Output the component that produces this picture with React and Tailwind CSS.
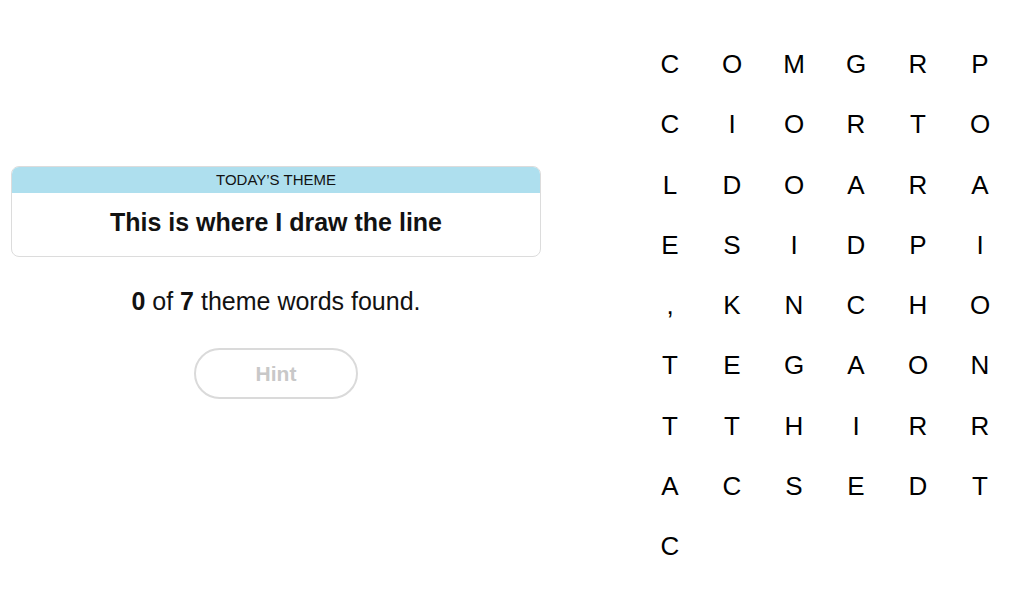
const LETTERS = [
  ['C', 'O', 'M', 'G', 'R', 'P'],
  ['C', 'I', 'O', 'R', 'T', 'O'],
  ['L', 'D', 'O', 'A', 'R', 'A'],
  ['E', 'S', 'I', 'D', 'P', 'I'],
  [',', 'K', 'N', 'C', 'H', 'O'],
  ['T', 'E', 'G', 'A', 'O', 'N'],
  ['T', 'T', 'H', 'I', 'R', 'R'],
  ['A', 'C', 'S', 'E', 'D', 'T'],
  ['C'],
];

export default function App() {
  return (
    <div className="flex h-[605px] w-[1024px] bg-white font-['Liberation_Sans',Arial,sans-serif] text-[#121212]">
      {/* theme panel */}
      <div className="ml-[11px] mt-[166px] w-[530px] shrink-0">
        <div className="overflow-hidden rounded-lg border border-[#dcdcdc]">
          <div className="flex h-[26px] items-center justify-center bg-[#aedfee] text-[15px] uppercase">
            Today&rsquo;s Theme
          </div>
          <div className="flex h-[63px] items-center justify-center pb-[4px] text-[25px] font-bold">
            This is where I draw the line
          </div>
        </div>
        <p className="mt-[29px] text-center text-[25px] leading-[30px]">
          <b>0</b> of <b>7</b> theme words found.
        </p>
        <div className="mt-[32px] flex justify-center">
          <button className="h-[51px] w-[164px] rounded-full border-2 border-[#dadada] text-[21px] font-bold text-[#c8c8c8]">
            Hint
          </button>
        </div>
      </div>

      {/* letter grid */}
      <div className="ml-[98px] mt-[34px] grid grid-cols-[repeat(6,62px)] auto-rows-[60.25px]">
        {LETTERS.flat().map((ch, i) => (
          <div key={i} className="flex items-center justify-center text-[26px] leading-none text-black">
            {ch}
          </div>
        ))}
      </div>
    </div>
  );
}
